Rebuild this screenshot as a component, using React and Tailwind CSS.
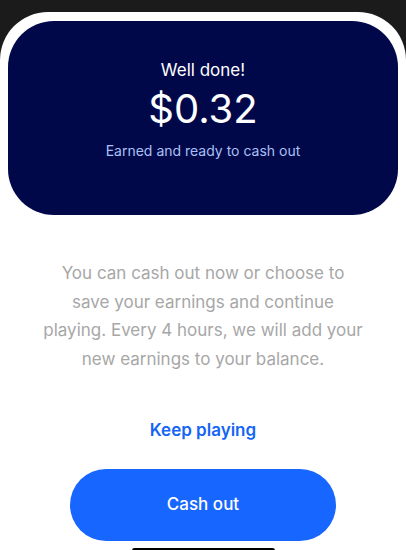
export default function App() {
  return (
    <div
      className="h-[550px] bg-[#1b1b1b] pt-[12px] overflow-hidden"
      style={{ fontFamily: 'Inter, "Noto Sans", sans-serif' }}
    >
      <div className="h-[538px] bg-white rounded-t-[48px] px-[8px] pt-[9px] flex flex-col">
        {/* Earnings card */}
        <div className="shrink-0 h-[194px] rounded-[46px] bg-[#01084a] flex flex-col items-center pt-[37px]">
          <div className="text-[17px] leading-[24px] text-white">Well done!</div>
          <div className="text-[40px] leading-[48px] mt-[3px] text-white">$0.32</div>
          <div className="text-[14px] leading-[20px] mt-[8px] text-[#a9c0f4]">
            Earned and ready to cash out
          </div>
        </div>

        {/* Info */}
        <p className="shrink-0 mt-[44px] text-center text-[17px] leading-[28.7px] text-[#a7a7a7]">
          You can cash out now or choose to<br />
          save your earnings and continue<br />
          playing. Every 4 hours, we will add your<br />
          new earnings to your balance.
        </p>

        <button className="shrink-0 mt-[44px] self-center text-[17px] leading-[24px] font-semibold text-[#1565f5]">
          Keep playing
        </button>

        <button className="shrink-0 mt-[27px] self-center w-[266px] h-[72px] rounded-full bg-[#1766ff] text-white text-[17px] font-medium">
          Cash out
        </button>

        <div className="shrink-0 mt-[7px] self-center w-[143px] h-[5px] rounded-full bg-black" />
      </div>
    </div>
  )
}
